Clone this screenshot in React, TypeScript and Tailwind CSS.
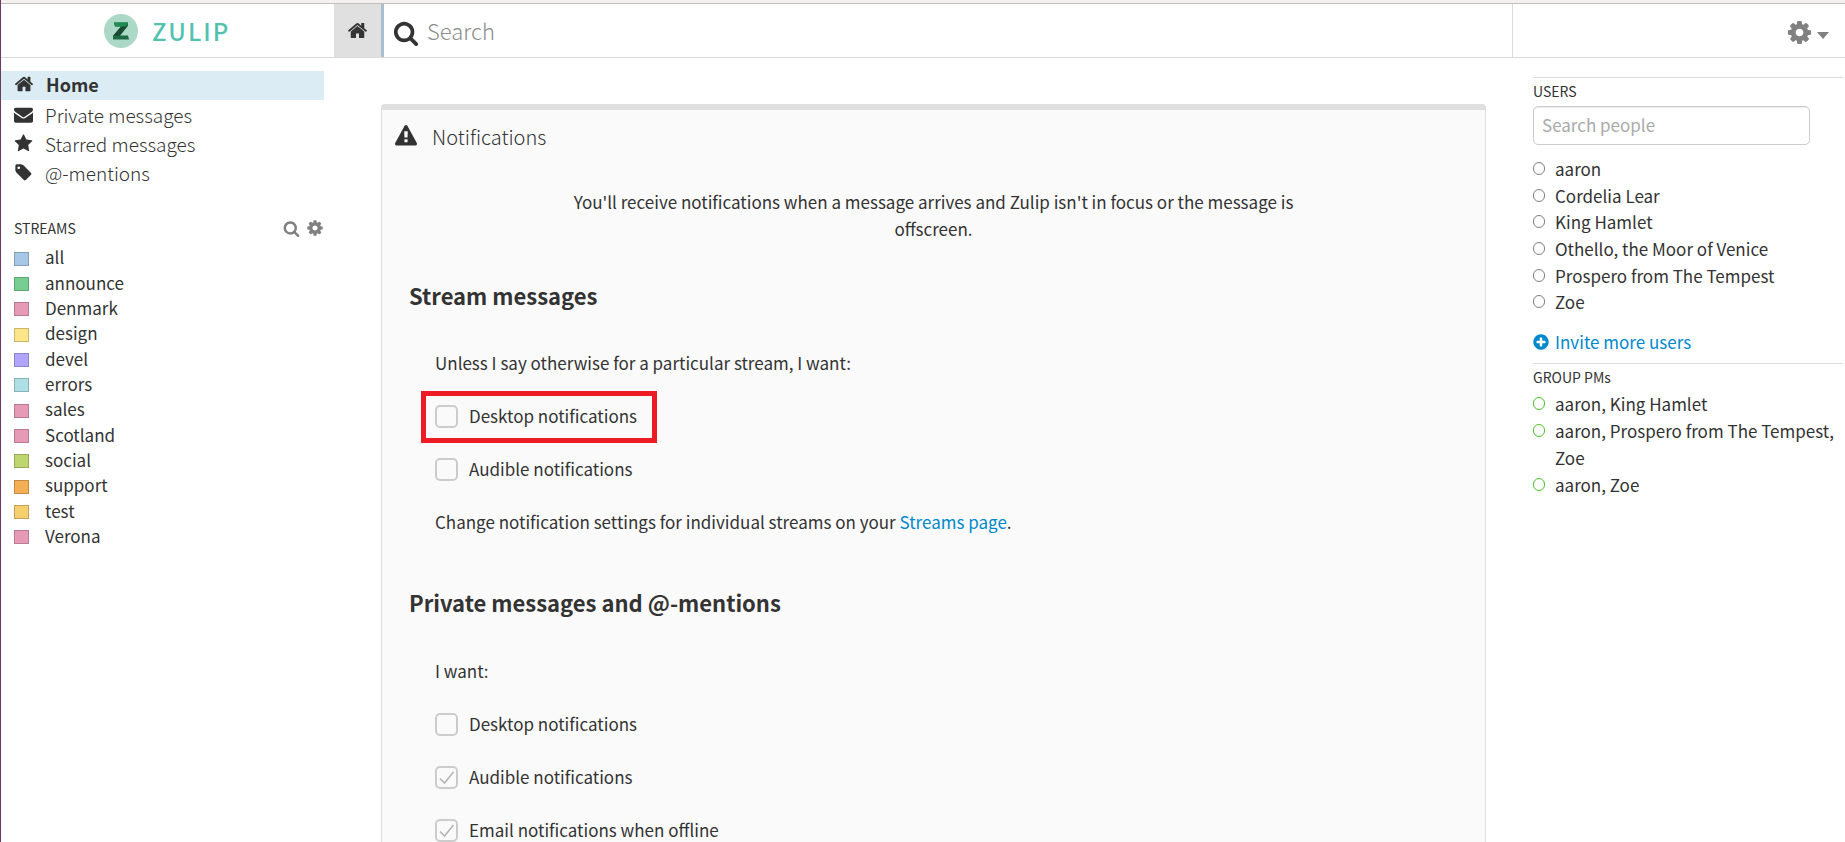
import type { ReactNode } from "react";

const icons = {
  home: "M1472 992v480q0 26-19 45t-45 19h-384v-384h-256v384h-384q-26 0-45-19t-19-45v-480q0-1 .5-3t.5-3l575-474 575 474q1 2 1 6zm223-69l-62 74q-8 9-21 11h-3q-13 0-21-7l-692-577-692 577q-12 8-24 7-13-2-21-11l-62-74q-8-10-7-23.5t11-21.5l719-599q32-26 76-26t76 26l244 204v-195q0-14 9-23t23-9h192q14 0 23 9t9 23v408l219 182q10 8 11 21.5t-7 23.5z",
  search: "M1216 832q0-185-131.5-316.5t-316.5-131.5-316.5 131.5-131.5 316.5 131.5 316.5 316.5 131.5 316.5-131.5 131.5-316.5zm512 832q0 52-38 90t-90 38q-54 0-90-38l-343-342q-179 124-399 124-143 0-273.5-55.5t-225-150-150-225-55.5-273.5 55.5-273.5 150-225 225-150 273.5-55.5 273.5 55.5 225 150 150 225 55.5 273.5q0 220-124 399l343 343q37 37 37 90z",
  star: "M1728 647q0 22-26 48l-363 354 86 500q1 7 1 20 0 21-10.5 35.5t-30.5 14.5q-19 0-40-12l-449-236-449 236q-22 12-40 12-21 0-31.5-14.5t-10.5-35.5q0-6 2-20l86-500-364-354q-25-27-25-48 0-37 56-46l502-73 225-455q19-41 49-41t49 41l225 455 502 73q56 9 56 46z",
  tag: "M576 448q0-53-37.5-90.5t-90.5-37.5-90.5 37.5-37.5 90.5 37.5 90.5 90.5 37.5 90.5-37.5 37.5-90.5zm1067 576q0 53-37 90l-491 492q-39 37-91 37-53 0-90-37l-715-716q-38-37-64.5-101t-26.5-117v-416q0-52 38-90t90-38h416q53 0 117 26.5t102 64.5l715 714q37 39 37 91z",
  cog: "M1152 896q0-106-75-181t-181-75-181 75-75 181 75 181 181 75 181-75 75-181zm512-109v222q0 12-8 23t-20 13l-185 28q-19 54-39 91 35 50 107 138 10 12 10 25t-9 23q-27 37-99 108t-94 71q-12 0-26-9l-138-108q-44 23-91 38-16 136-29 186-7 28-36 28h-222q-14 0-24.5-8.5t-11.5-21.5l-28-184q-49-16-90-37l-141 107q-10 9-25 9-14 0-25-11-126-114-165-168-7-10-7-23 0-12 8-23 15-21 51-66.5t54-70.5q-27-50-41-99l-183-27q-13-2-21-12.5t-8-23.5v-222q0-12 8-23t19-13l186-28q14-46 39-92-40-57-107-138-10-12-10-24 0-10 9-23 26-36 98.5-107.5t94.5-71.5q13 0 26 10l138 107q44-23 91-38 16-136 29-186 7-28 36-28h222q14 0 24.5 8.5t11.5 21.5l28 184q49 16 90 37l142-107q9-9 24-9 13 0 25 10 129 119 165 170 7 8 7 22 0 12-8 23-15 21-51 66.5t-54 70.5q26 50 41 98l183 28q13 2 21 12.5t8 23.5z",
  plus: "M1344 960v-128q0-26-19-45t-45-19h-256v-256q0-26-19-45t-45-19h-128q-26 0-45 19t-19 45v256h-256q-26 0-45 19t-19 45v128q0 26 19 45t45 19h256v256q0 26 19 45t45 19h128q26 0 45-19t19-45v-256h256q26 0 45-19t19-45zm320-64q0 209-103 385.5t-279.5 279.5-385.5 103-385.5-103-279.5-279.5-103-385.5 103-385.5 279.5-279.5 385.5-103 385.5 103 279.5 279.5 103 385.5z",
  warning: "M1024 1375v-190q0-14-9.5-23.5t-22.5-9.5h-192q-13 0-22.5 9.5t-9.5 23.5v190q0 14 9.5 23.5t22.5 9.5h192q13 0 22.5-9.5t9.5-23.5zm-2-374l18-459q0-12-10-19-13-11-24-11h-220q-11 0-24 11-10 7-10 21l17 457q0 10 10 16.5t24 6.5h185q14 0 23.5-6.5t10.5-16.5zm-14-934l768 1408q35 63-2 126-17 29-46.5 46t-63.5 17h-1536q-34 0-63.5-17t-46.5-46q-37-63-2-126l768-1408q17-31 47-49t65-18 65 18 47 49z",
  envelope: "M1792 710v794q0 66-47 113t-113 47h-1472q-66 0-113-47t-47-113v-794q44 49 101 87 362 246 497 345 57 42 92.5 65.5t94.5 48 110 24.5h2q51 0 110-24.5t94.5-48 92.5-65.5q170-123 498-345 57-39 100-87zm0-294q0 79-49 151t-122 123q-376 261-468 325-10 7-42.5 31t-54 38.5-52 32.5-57.5 27-50 9h-2q-23 0-50-9t-57.5-27-52-32.5-54-38.5-42.5-31q-91-64-262-182.5t-205-142.5q-62-42-117-115.5t-55-136.5q0-78 41.5-130t118.5-52h1472q65 0 112.5 47t47.5 113z",
};

function Icon({ name, className }: { name: keyof typeof icons; className: string }) {
  return (
    <svg viewBox="0 0 1792 1792" className={`shrink-0 overflow-visible ${className}`} fill="currentColor" aria-hidden="true">
      <path d={icons[name]} />
    </svg>
  );
}

const streams = [
  ["all", "bg-[#a6c7e5]"],
  ["announce", "bg-[#76ce90]"],
  ["Denmark", "bg-[#e79ab5]"],
  ["design", "bg-[#fae589]"],
  ["devel", "bg-[#b0a5fd]"],
  ["errors", "bg-[#addfe5]"],
  ["sales", "bg-[#e79ab5]"],
  ["Scotland", "bg-[#e79ab5]"],
  ["social", "bg-[#bfd56f]"],
  ["support", "bg-[#f4ae55]"],
  ["test", "bg-[#f5ce6e]"],
  ["Verona", "bg-[#e79ab5]"],
];

const users = ["aaron", "Cordelia Lear", "King Hamlet", "Othello, the Moor of Venice", "Prospero from The Tempest", "Zoe"];
const groups = ["aaron, King Hamlet", "aaron, Prospero from The Tempest, Zoe", "aaron, Zoe"];

function NavLink({ icon, children }: { icon: keyof typeof icons; children: ReactNode }) {
  return (
    <a href="#" className="flex h-[29px] items-center gap-3 pl-[13px] font-light">
      <Icon name={icon} className="size-[19px]" />
      {children}
    </a>
  );
}

function Person({ name, ring }: { name: string; ring: string }) {
  return (
    <li className="flex">
      <span className={`mt-[7px] mr-[10px] h-[13px] w-3 shrink-0 rounded-full border ${ring}`} />
      <a href="#">{name}</a>
    </li>
  );
}

function Check({ id, label, checked, marked }: { id: string; label: string; checked?: boolean; marked?: boolean }) {
  return (
    <div className="relative flex h-[27px] items-center gap-[11px]">
      {marked && <div className="pointer-events-none absolute -top-[11px] -left-[14px] h-[52px] w-[236px] border-[5px] border-[#ed1c24]" />}
      <span className="relative top-px size-[23px]">
        <input
          id={id}
          type="checkbox"
          defaultChecked={checked}
          className="peer block size-[23px] appearance-none rounded-[5px] border-2 border-[#ccc]"
        />
        <svg viewBox="0 0 23 23" className="pointer-events-none absolute inset-0 hidden peer-checked:block" fill="none" stroke="#b5b5b5" strokeWidth="1.6">
          <path d="M5 12.5L9.5 17L18.5 6" />
        </svg>
      </span>
      <label htmlFor={id}>{label}</label>
    </div>
  );
}

export default function App() {
  return (
    <div className="flex h-screen flex-col overflow-hidden border-l border-[#6b3a63] bg-white font-['Noto_Sans_CJK_SC',sans-serif] text-[17px] leading-[27px] text-[#333]">
      <div className="h-1 shrink-0 border-b border-[#c3bfba] bg-[#f2f1f0]" />
      <header className="flex h-[54px] shrink-0 border-b border-[#d9d9d9]">
        <a href="#" className="flex w-[333px] items-center gap-[14px] pl-[103px] text-[24px] font-medium tracking-[2px] text-[#52c2af]">
          <svg viewBox="0 0 34 34" className="size-[34px]" aria-hidden="true">
            <circle cx="17" cy="17" r="17" fill="#acd8c8" />
            <path d="M10 8.5H24L24 11.5L16 21.5H24L25 25.5H9L9 22L17 12.5H11Z" fill="#1c6b43" />
            <path d="M24 11.5L16 21.5L9 22L17 12.5Z" fill="#174a31" />
            <path d="M10 8.5H24L22 12.5H11Z" fill="#1f8a52" />
          </svg>
          ZULIP
        </a>
        <a href="#" aria-label="Home" className="flex w-[47px] items-center justify-center bg-[#e0e0e0]">
          <Icon name="home" className="size-[21px]" />
        </a>
        <label className="flex flex-1 items-center gap-2 border-l-[3px] border-[#aabfcd] pl-[9px]">
          <Icon name="search" className="mt-1 size-[26px]" />
          <input aria-label="Search" placeholder="Search" className="min-w-0 flex-1 text-[22px] font-light outline-none placeholder:text-[#8c8c8c]" />
        </label>
        <div className="flex w-[333px] items-center justify-end border-l border-[#d9d9d9] pt-1 pr-4">
          <button aria-label="Settings menu" className="flex items-center gap-1 text-[#808080]">
            <Icon name="cog" className="size-[27px]" />
            <svg viewBox="0 0 12 7" className="mt-[5px] h-[7px] w-3" fill="currentColor" aria-hidden="true">
              <path d="M0 0H12L6 7Z" />
            </svg>
          </button>
        </div>
      </header>

      <div className="flex min-h-0 flex-1">
        <nav className="w-[323px] shrink-0 pt-[13px]">
          <a href="#" className="flex h-[29px] items-center gap-3 bg-[#dcecf5] pb-[3px] pl-[13px] text-[18px] font-bold">
            <Icon name="home" className="size-[20px]" />
            Home
          </a>
          <div className="text-[19px]">
            <NavLink icon="envelope">Private messages</NavLink>
            <NavLink icon="star">Starred messages</NavLink>
            <NavLink icon="tag">@-mentions</NavLink>
          </div>
          <div className="mt-[27px] flex h-[28px] items-center pl-[13px]">
            <h2 className="flex-1 text-[14px]">STREAMS</h2>
            <button aria-label="Filter streams" className="mr-[6px] text-[#808080]">
              <Icon name="search" className="size-[17px]" />
            </button>
            <button aria-label="Stream settings" className="text-[#808080]">
              <Icon name="cog" className="size-[18px]" />
            </button>
          </div>
          <ul className="mt-[2px] grid h-[304px] grid-rows-12 pl-[13px]">
            {streams.map(([name, color]) => (
              <li key={name} className="flex items-center">
                <span className={`mt-1 mr-4 h-[14px] w-[15px] border border-black/20 ${color}`} />
                <a href="#">{name}</a>
              </li>
            ))}
          </ul>
        </nav>

        <main className="ml-[57px] min-w-0 flex-1 overflow-hidden pt-[46px]">
          <section className="min-h-full rounded-t-[4px] border border-t-[6px] border-b-0 border-[#dfdfdf] bg-[#fafafa]">
            <h1 className="flex h-[52px] items-center gap-[15px] pl-[13px] text-[20px] font-light">
              <Icon name="warning" className="size-[22px]" />
              Notifications
            </h1>
            <p className="mx-auto mt-[26px] w-[760px] text-center">
              You'll receive notifications when a message arrives and Zulip isn't in focus or the message is offscreen.
            </p>
            <div className="pl-[27px]">
              <h2 className="mt-[40px] text-[22px] font-bold">Stream messages</h2>
              <div className="mt-[40px] flex flex-col gap-[26px] pl-[26px]">
                <p>Unless I say otherwise for a particular stream, I want:</p>
                <Check id="stream-desktop" label="Desktop notifications" marked />
                <Check id="stream-audible" label="Audible notifications" />
                <p>
                  Change notification settings for individual streams on your{" "}
                  <a href="#" className="text-[#0088cc]">Streams page</a>.
                </p>
              </div>
              <h2 className="mt-[54px] text-[22px] font-bold">Private messages and @-mentions</h2>
              <div className="mt-[41px] flex flex-col gap-[26px] pl-[26px]">
                <p>I want:</p>
                <Check id="pm-desktop" label="Desktop notifications" />
                <Check id="pm-audible" label="Audible notifications" checked />
                <Check id="pm-email" label="Email notifications when offline" checked />
              </div>
            </div>
          </section>
        </main>

        <aside className="ml-[47px] w-[312px] shrink-0 pt-[19px] pr-[2px]">
          <h2 className="border-t border-[#ddd] text-[14px]">USERS</h2>
          <input
            aria-label="Search people"
            placeholder="Search people"
            className="mt-[1px] block h-[39px] w-[277px] rounded-[5px] border border-[#ccc] px-2 pb-[2px] shadow-[inset_0_1px_1px_rgba(0,0,0,0.08)] outline-none placeholder:text-[#aaa]"
          />
          <ul className="mt-[10px] grid h-[160px] grid-rows-6">
            {users.map((name) => (
              <Person key={name} name={name} ring="border-[#7f7f7f]" />
            ))}
          </ul>
          <a href="#" className="mt-[13px] mb-[8px] -ml-px flex items-center gap-[5px] text-[#0088cc]">
            <Icon name="plus" className="size-[18px]" />
            Invite more users
          </a>
          <h2 className="border-t border-[#ddd] text-[14px]">GROUP PMs</h2>
          <ul className="-mt-px">
            {groups.map((name) => (
              <Person key={name} name={name} ring="border-[#4bc128]" />
            ))}
          </ul>
        </aside>
      </div>
    </div>
  );
}
